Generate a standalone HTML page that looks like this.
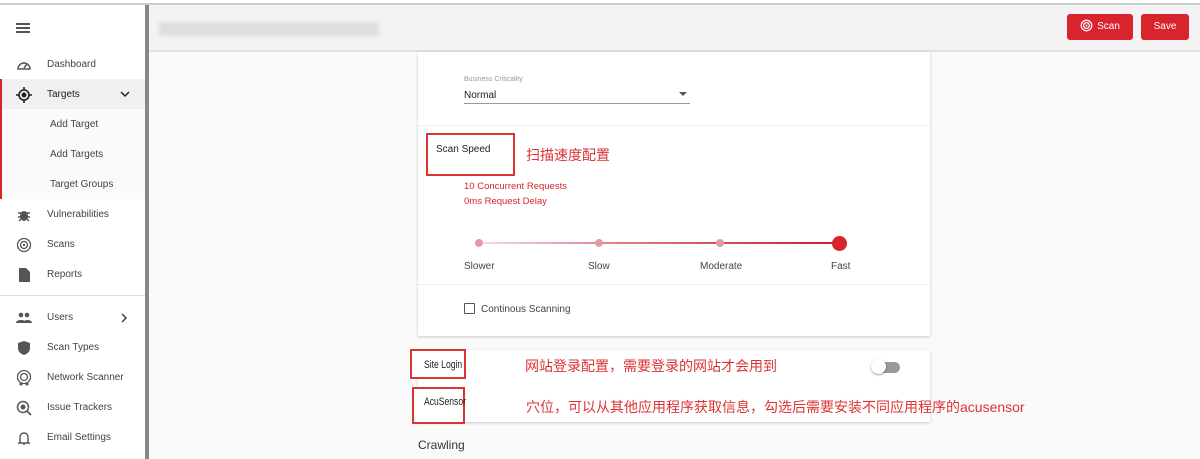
<!DOCTYPE html>
<html><head><meta charset="utf-8"><style>
*{margin:0;padding:0;box-sizing:border-box}
body{width:1200px;height:459px;overflow:hidden;background:#fafafa;font-family:"Liberation Sans","Noto Sans CJK SC",sans-serif;position:relative;color:#333}
.abs{position:absolute}
.side{left:0;top:5px;width:145px;height:454px;background:#fff}
.vbar{left:145px;top:5px;width:4px;height:454px;background:#888}
.item{position:absolute;left:0;width:145px;height:30px;font-size:10px;color:#444}
.item span{position:absolute;left:47px;top:9px}
.item svg{position:absolute;left:16px;top:7px}
.sub span{left:50px}
.hdr{left:149px;top:5px;width:1051px;height:47px;background:#f3f3f3;border-bottom:2px solid #e0e0e0}
.btn{background:#d9232d;color:#fff;font-size:10px;border-radius:3px;height:26px;top:14px;text-align:center;line-height:26px}
.card{background:#fff;box-shadow:0 1px 3px rgba(0,0,0,.2)}
.red{color:#d9232d}
.box{border:2px solid #d33;}
.cn{color:#d33;font-size:14px}
.cond{transform:scaleX(0.78);transform-origin:left top;white-space:nowrap}
</style></head><body>
<div class="abs" style="left:0;top:0;width:1200px;height:5px;background:#fff;border-bottom:2px solid #ccc"></div>
<div class="abs side">
<div class="abs" style="left:16px;top:18px;width:14px;height:2px;background:#555;box-shadow:0 4px #555,0 8px #555"></div>
<div class="item" style="top:45px"><svg width="16" height="16" viewBox="0 0 16 16"><path d="M2 12a6 6 0 1 1 12 0z" fill="none" stroke="#555" stroke-width="1.5"/><path d="M8 11l3-4" stroke="#555" stroke-width="1.5"/></svg><span>Dashboard</span></div>
<div class="abs" style="left:0;top:74px;width:145px;height:120px;background:#fafafa"></div>
<div class="abs" style="left:0;top:74px;width:145px;height:30px;background:#f0f0f0"></div>
<div class="abs" style="left:0;top:74px;width:2px;height:120px;background:#d9232d"></div>
<div class="item" style="top:75px"><svg width="16" height="16" viewBox="0 0 16 16"><circle cx="8" cy="8" r="5" fill="none" stroke="#222" stroke-width="1.6"/><circle cx="8" cy="8" r="2.5" fill="#222"/><path d="M8 0v3M8 13v3M0 8h3M13 8h3" stroke="#222" stroke-width="1.6"/></svg><span style="color:#222">Targets</span><svg style="left:120px;top:10px" width="10" height="8" viewBox="0 0 10 8"><path d="M1 2l4 4 4-4" fill="none" stroke="#222" stroke-width="1.5"/></svg></div>
<div class="item sub" style="top:105px"><span>Add Target</span></div>
<div class="item sub" style="top:135px"><span>Add Targets</span></div>
<div class="item sub" style="top:165px"><span>Target Groups</span></div>
<div class="item" style="top:195px"><svg width="16" height="16" viewBox="0 0 16 16"><ellipse cx="8" cy="9" rx="4" ry="5" fill="#555"/><path d="M2 6h12M2 10h12M3 14l2-2M13 14l-2-2" stroke="#555" stroke-width="1.4"/></svg><span>Vulnerabilities</span></div>
<div class="item" style="top:225px"><svg width="16" height="16" viewBox="0 0 16 16"><circle cx="8" cy="8" r="6.5" fill="none" stroke="#555" stroke-width="1.3"/><circle cx="8" cy="8" r="3.5" fill="none" stroke="#555" stroke-width="1.3"/><circle cx="8" cy="8" r="1.2" fill="#555"/></svg><span>Scans</span></div>
<div class="item" style="top:255px"><svg width="16" height="16" viewBox="0 0 16 16"><path d="M3 1h7l4 4v10H3z" fill="#555"/></svg><span>Reports</span></div>
<div class="abs" style="left:0;top:290px;width:145px;height:1px;background:#ddd"></div>
<div class="item" style="top:298px"><svg width="16" height="16" viewBox="0 0 16 16"><circle cx="5" cy="5" r="2.3" fill="#555"/><circle cx="11" cy="5" r="2.3" fill="#555"/><path d="M0 13c0-4 10-4 10 0zM7 13c0-4 9-4 9 0z" fill="#555"/></svg><span>Users</span><svg style="left:120px;top:10px" width="8" height="10" viewBox="0 0 8 10"><path d="M2 1l4 4-4 4" fill="none" stroke="#444" stroke-width="1.5"/></svg></div>
<div class="item" style="top:328px"><svg width="16" height="16" viewBox="0 0 16 16"><path d="M8 1l6 2v5c0 4-3 6-6 7-3-1-6-3-6-7V3z" fill="#555"/></svg><span>Scan Types</span></div>
<div class="item" style="top:358px"><svg width="16" height="16" viewBox="0 0 16 16"><circle cx="8" cy="7" r="6.5" fill="none" stroke="#555" stroke-width="1.3"/><circle cx="8" cy="7" r="3.5" fill="none" stroke="#555" stroke-width="1.3"/><circle cx="5" cy="14" r="1.5" fill="#555"/><circle cx="11" cy="14" r="1.5" fill="#555"/></svg><span>Network Scanner</span></div>
<div class="item" style="top:388px"><svg width="16" height="16" viewBox="0 0 16 16"><circle cx="7" cy="7" r="5.5" fill="none" stroke="#555" stroke-width="1.5"/><circle cx="7" cy="7" r="2.5" fill="#555"/><path d="M11 11l4 4" stroke="#555" stroke-width="1.8"/></svg><span>Issue Trackers</span></div>
<div class="item" style="top:418px"><svg width="16" height="16" viewBox="0 0 16 16"><path d="M4 12V7a4 4 0 0 1 8 0v5l1 1H3z" fill="none" stroke="#555" stroke-width="1.4"/><path d="M7 14h2" stroke="#555" stroke-width="1.5"/></svg><span>Email Settings</span></div>
</div>
<div class="abs vbar"></div>
<div class="abs hdr"><div class="abs" style="left:10px;top:17px;width:220px;height:14px;background:#ddd;filter:blur(2px)"></div></div>
<div class="abs btn" style="left:1067px;width:66px"><svg style="vertical-align:-3px;margin-right:4px" width="13" height="13" viewBox="0 0 16 16"><circle cx="8" cy="8" r="6.5" fill="none" stroke="#fff" stroke-width="1.5"/><circle cx="8" cy="8" r="3.5" fill="none" stroke="#fff" stroke-width="1.5"/><circle cx="8" cy="8" r="1.2" fill="#fff"/></svg>Scan</div>
<div class="abs btn" style="left:1141px;width:48px">Save</div>
<div class="abs card" style="left:418px;top:52px;width:512px;height:284px"></div>
<div class="abs" style="left:464px;top:76px;font-size:7px;color:#999">Business Criticality</div>
<div class="abs" style="left:464px;top:90px;font-size:10px;color:#222">Normal</div>
<div class="abs" style="left:679px;top:92px;width:0;height:0;border-left:4px solid transparent;border-right:4px solid transparent;border-top:4px solid #555"></div>
<div class="abs" style="left:464px;top:103px;width:226px;height:1px;background:#999"></div>
<div class="abs" style="left:418px;top:125px;width:512px;height:1px;background:#eee"></div>
<div class="abs box" style="left:426px;top:133px;width:89px;height:43px"></div>
<div class="abs" style="left:436px;top:144px;font-size:10px;color:#222">Scan Speed</div>
<div class="abs cn" style="left:526px;top:145px">扫描速度配置</div>
<div class="abs red" style="left:464px;top:181px;font-size:9.5px">10 Concurrent Requests</div>
<div class="abs red" style="left:464px;top:196px;font-size:9.5px">0ms Request Delay</div>
<div class="abs" style="left:479px;top:242px;width:360px;height:2px;background:linear-gradient(90deg,#f6dde0,#e07a88 40%,#c41e2b)"></div>
<div class="abs" style="left:475px;top:239px;width:8px;height:8px;border-radius:50%;background:#e49aa5"></div>
<div class="abs" style="left:595px;top:239px;width:8px;height:8px;border-radius:50%;background:#e49aa5"></div>
<div class="abs" style="left:716px;top:239px;width:8px;height:8px;border-radius:50%;background:#e49aa5"></div>
<div class="abs" style="left:832px;top:236px;width:15px;height:15px;border-radius:50%;background:#d9232d"></div>
<div class="abs" style="left:464px;top:261px;font-size:10px;color:#444">Slower</div>
<div class="abs" style="left:588px;top:261px;font-size:10px;color:#444">Slow</div>
<div class="abs" style="left:700px;top:261px;font-size:10px;color:#444">Moderate</div>
<div class="abs" style="left:831px;top:261px;font-size:10px;color:#444">Fast</div>
<div class="abs" style="left:418px;top:284px;width:512px;height:1px;background:#eee"></div>
<div class="abs" style="left:464px;top:303px;width:11px;height:11px;border:1.5px solid #555;border-radius:1px"></div>
<div class="abs" style="left:481px;top:304px;font-size:10px;color:#444">Continous Scanning</div>
<div class="abs card" style="left:418px;top:350px;width:512px;height:72px"></div>
<div class="abs" style="left:872px;top:362px;width:28px;height:11px;border-radius:6px;background:#999"></div>
<div class="abs" style="left:871px;top:359px;width:15px;height:15px;border-radius:50%;background:#fff;box-shadow:0 1px 2px rgba(0,0,0,.4)"></div>
<div class="abs box" style="left:410px;top:349px;width:56px;height:30px;background:#fff"></div>
<div class="abs cond" style="left:424px;top:359px;font-size:11px;color:#222">Site Login</div>
<div class="abs cn" style="left:525px;top:356px">网站登录配置，需要登录的网站才会用到</div>
<div class="abs box" style="left:412px;top:387px;width:53px;height:37px;background:#fff"></div>
<div class="abs cond" style="left:424px;top:396px;font-size:11px;color:#222">AcuSensor</div>
<div class="abs cn" style="left:526px;top:397px">穴位，可以从其他应用程序获取信息，勾选后需要安装不同应用程序的acusensor</div>
<div class="abs" style="left:418px;top:438px;font-size:12px;color:#333">Crawling</div>
</body></html>
